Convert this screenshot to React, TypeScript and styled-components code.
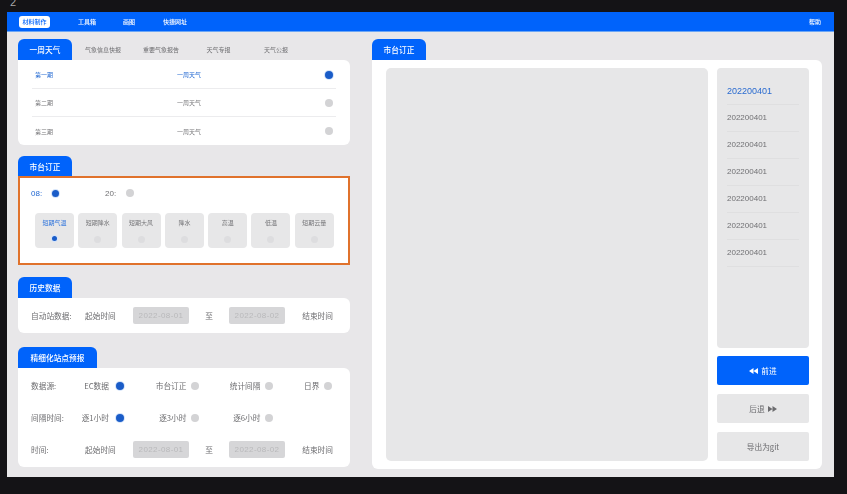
import styled, { createGlobalStyle } from "styled-components";

const Global = createGlobalStyle`
  html, body {
    margin: 0;
    padding: 0;
    background: #141316;
    font-family: "Noto Sans CJK SC", "Liberation Sans", sans-serif;
  }
  * { box-sizing: border-box; }
`;

const Page = styled.div`
  position: relative;
  width: 847px;
  height: 494px;
  padding: 12px 13px 17px 7px;
  background: #141316;
  overflow: hidden;
`;

const Corner = styled.span`
  position: absolute;
  left: 10px;
  top: -5px;
  font: 11px/14px "Liberation Sans", sans-serif;
  color: #a8a8a8;
`;

const Frame = styled.div`
  height: 465px;
  display: flex;
  flex-direction: column;
  background: #e8e7e9;
  filter: blur(0.35px);
`;

const Header = styled.header`
  height: 20px;
  flex: none;
  display: flex;
  align-items: center;
  padding: 0 13px 0 12px;
  background: #0063fb;
  border-bottom: 1px solid #6ba6f5;
  color: #fff;
  font-size: 6px;
  font-weight: 500;
`;

const NavItem = styled.span<{ $active?: boolean; $width: number }>`
  width: ${(p) => p.$width}px;
  height: 12px;
  line-height: 12px;
  text-align: center;
  border-radius: 3px;
  background: ${(p) => (p.$active ? "#fff" : "transparent")};
  color: ${(p) => (p.$active ? "#0063fb" : "#fff")};
`;

const NavGap = styled.span<{ $width: number }>`
  width: ${(p) => p.$width}px;
`;

const Help = styled.span`
  margin-left: auto;
`;

const Body = styled.div`
  flex: 1;
  display: flex;
  gap: 22px;
  padding: 7px 12px 8px 11px;
`;

const Left = styled.div`
  width: 332px;
  display: flex;
  flex-direction: column;
`;

const Right = styled.div`
  width: 450px;
  display: flex;
  flex-direction: column;
`;

const TabRow = styled.div<{ $height?: number }>`
  height: ${(p) => p.$height ?? 21}px;
  flex: none;
  display: flex;
  align-items: stretch;
`;

const Tab = styled.div<{ $width?: number }>`
  width: ${(p) => p.$width ?? 54}px;
  display: flex;
  align-items: center;
  justify-content: center;
  background: #0063fb;
  border-radius: 6px 6px 0 0;
  color: #fff;
  font-size: 7.7px;
  font-weight: 500;
`;

const SoftTab = styled.div<{ $width: number }>`
  width: ${(p) => p.$width}px;
  display: flex;
  align-items: center;
  justify-content: center;
  color: #6f6f72;
  font-size: 6px;
`;

const Card = styled.div<{ $height: number; $mb?: number }>`
  height: ${(p) => p.$height}px;
  margin-bottom: ${(p) => p.$mb ?? 0}px;
  flex: none;
  background: #fff;
  border-radius: 0 6px 6px 6px;
`;

const WeekList = styled(Card)`
  padding: 1px 14px 0;
`;

const WeekRow = styled.div<{ $last?: boolean; $active?: boolean }>`
  height: 28px;
  display: grid;
  grid-template-columns: 142px 1fr 10px;
  align-items: center;
  padding: 0 3px;
  border-bottom: ${(p) => (p.$last ? "none" : "1px solid #ececee")};
  color: ${(p) => (p.$active ? "#1f66d1" : "#77777a")};
  font-size: 6px;

  & > i {
    justify-self: end;
  }
`;

const Dot = styled.i<{ $on?: boolean; $size?: number; $color?: string }>`
  display: block;
  flex: none;
  width: ${(p) => p.$size ?? 7}px;
  height: ${(p) => p.$size ?? 7}px;
  border-radius: 50%;
  background: ${(p) => (p.$on ? "#1a5cc8" : p.$color ?? "#d3d3d5")};
  box-shadow: ${(p) => (p.$on ? "0 0 0 1px #d5e4fa" : "none")};
`;

const OutlinedCard = styled.div`
  height: 89px;
  margin-bottom: 12px;
  flex: none;
  padding: 9px 0 0 11px;
  background: #fff;
  border: 2px solid #e0722c;
`;

const ShiftRow = styled.div`
  display: flex;
  align-items: center;
  height: 12px;
`;

const Shift = styled.div<{ $active?: boolean; $width: number }>`
  width: ${(p) => p.$width}px;
  display: flex;
  align-items: center;
  gap: 10px;
  color: ${(p) => (p.$active ? "#1f66d1" : "#6f6f72")};
  font: 8px "Liberation Sans", sans-serif;
`;

const Chips = styled.div`
  display: flex;
  gap: 4.3px;
  margin: 14px 0 0 4px;
`;

const Chip = styled.div<{ $active?: boolean }>`
  width: 39px;
  height: 35px;
  display: flex;
  flex-direction: column;
  align-items: center;
  gap: 9px;
  padding-top: 5px;
  background: #e7e7e8;
  border-radius: 4px;
  color: ${(p) => (p.$active ? "#2f74dc" : "#77777a")};
  font-size: 6px;
  line-height: 9px;
`;

const FormCard = styled(Card)`
  padding: 0 17px 0 13px;
  display: flex;
  flex-direction: column;
  justify-content: center;
  gap: 18px;
`;

const FormRow = styled.div`
  display: grid;
  grid-template-columns: 54px 48px 56px 40px 56px 1fr;
  align-items: center;
  height: 14px;
  color: #6c6c6f;
  font-size: 7.7px;
`;

const Label = styled.span`
  white-space: nowrap;
`;

const DateBox = styled.div`
  width: 56px;
  height: 17px;
  margin: -1.5px 0;
  text-align: center;
  background: #d6d6d8;
  border-radius: 2px;
  color: #b9b9bb;
  font: 8px/17px "Liberation Sans", sans-serif;
  letter-spacing: 0.4px;
`;

const To = styled.span`
  justify-self: center;
`;

const End = styled.span`
  justify-self: end;
`;

const OptionRow = styled.div`
  display: grid;
  grid-template-columns: 54px 39px 75px 74px 59px;
  align-items: center;
  height: 14px;
  color: #6c6c6f;
  font-size: 7.7px;
`;

const Option = styled.div`
  display: flex;
  align-items: center;
  justify-content: flex-end;
  gap: 4.5px;
  white-space: nowrap;

  &:nth-child(2) {
    gap: 7px;
  }
`;

const Main = styled.div`
  flex: 1;
  display: flex;
  gap: 9px;
  padding: 8px 13px 8px 14px;
  background: #fff;
  border-radius: 0 6px 6px 6px;
`;

const Viewer = styled.div`
  width: 322px;
  background: #e7e7e8;
  border-radius: 5px;
`;

const Side = styled.div`
  flex: 1;
  display: flex;
  flex-direction: column;
  gap: 9px;
`;

const FileList = styled.div`
  height: 280px;
  margin-bottom: -1px;
  padding: 10px 10px 0;
  background: #e7e7e8;
  border-radius: 4px;
`;

const FileItem = styled.div<{ $active?: boolean }>`
  height: 27px;
  border-bottom: 1px solid #dfdfe0;
  color: ${(p) => (p.$active ? "#2a6bd0" : "#707073")};
  font: ${(p) => (p.$active ? 9 : 8)}px/26px "Liberation Sans", sans-serif;
`;

const Action = styled.div<{ $primary?: boolean }>`
  height: 29px;
  display: flex;
  align-items: center;
  justify-content: center;
  gap: 3px;
  background: ${(p) => (p.$primary ? "#0063fb" : "#e7e7e8")};
  border-radius: 2px;
  color: ${(p) => (p.$primary ? "#fff" : "#6c6c6f")};
  font-size: 7.7px;
`;

const Arrows = ({ back }: { back?: boolean }) => (
  <svg width="9" height="6" viewBox="0 0 9 6" style={back ? { transform: "scaleX(-1)" } : undefined}>
    <path d="M0 0 L4.5 3 L0 6 Z M4.5 0 L9 3 L4.5 6 Z" fill="currentColor" />
  </svg>
);

const weeks = ["第一期", "第二期", "第三期"];
const tabs: [string, number][] = [
  ["气象信息快报", 62],
  ["重要气象报告", 54],
  ["天气专报", 61],
  ["天气公报", 54],
];
const chips = ["短期气温", "短期降水", "短期大风", "降水", "高温", "低温", "短期云量"];
const sources = ["EC数据", "市台订正", "统计间隔", "日界"];
const spans = ["逐1小时", "逐3小时", "逐6小时"];

export default function App() {
  return (
    <Page>
      <Global />
      <Corner>2</Corner>
      <Frame>
        <Header>
          <NavItem $active $width={31}>材料制作</NavItem>
          <NavGap $width={19} />
          <NavItem $width={36}>工具箱</NavItem>
          <NavGap $width={9} />
          <NavItem $width={30}>画图</NavItem>
          <NavGap $width={14} />
          <NavItem $width={34}>快捷网址</NavItem>
          <Help>帮助</Help>
        </Header>
        <Body>
          <Left>
            <TabRow>
              <Tab>一周天气</Tab>
              {tabs.map(([t, w]) => (
                <SoftTab key={t} $width={w}>{t}</SoftTab>
              ))}
            </TabRow>
            <WeekList $height={85} $mb={11}>
              {weeks.map((w, i) => (
                <WeekRow key={w} $active={i === 0} $last={i === 2}>
                  <span>{w}</span>
                  <span>一周天气</span>
                  <Dot $on={i === 0} $size={8} />
                </WeekRow>
              ))}
            </WeekList>

            <TabRow $height={20}>
              <Tab>市台订正</Tab>
            </TabRow>
            <OutlinedCard>
              <ShiftRow>
                <Shift $active $width={74}>08: <Dot $on /></Shift>
                <Shift $width={60}>20: <Dot $size={8} /></Shift>
              </ShiftRow>
              <Chips>
                {chips.map((c, i) => (
                  <Chip key={c} $active={i === 0}>
                    {c}
                    <Dot $on={i === 0} $size={i === 0 ? 5 : 7} $color="#dddddf" />
                  </Chip>
                ))}
              </Chips>
            </OutlinedCard>

            <TabRow>
              <Tab>历史数据</Tab>
            </TabRow>
            <FormCard $height={35} $mb={14}>
              <FormRow>
                <Label>自动站数据:</Label>
                <Label>起始时间</Label>
                <DateBox>2022-08-01</DateBox>
                <To>至</To>
                <DateBox>2022-08-02</DateBox>
                <End>结束时间</End>
              </FormRow>
            </FormCard>

            <TabRow>
              <Tab $width={79}>精细化站点预报</Tab>
            </TabRow>
            <FormCard $height={99}>
              <OptionRow>
                <Label>数据源:</Label>
                {sources.map((s, i) => (
                  <Option key={s}>
                    {s}
                    <Dot $on={i === 0} $size={8} />
                  </Option>
                ))}
              </OptionRow>
              <OptionRow>
                <Label>间隔时间:</Label>
                {spans.map((s, i) => (
                  <Option key={s}>
                    {s}
                    <Dot $on={i === 0} $size={8} />
                  </Option>
                ))}
              </OptionRow>
              <FormRow>
                <Label>时间:</Label>
                <Label>起始时间</Label>
                <DateBox>2022-08-01</DateBox>
                <To>至</To>
                <DateBox>2022-08-02</DateBox>
                <End>结束时间</End>
              </FormRow>
            </FormCard>
          </Left>

          <Right>
            <TabRow>
              <Tab>市台订正</Tab>
            </TabRow>
            <Main>
              <Viewer />
              <Side>
                <FileList>
                  {Array.from({ length: 7 }, (_, i) => (
                    <FileItem key={i} $active={i === 0}>202200401</FileItem>
                  ))}
                </FileList>
                <Action $primary><Arrows back /> 前进</Action>
                <Action>后退 <Arrows /></Action>
                <Action>导出为git</Action>
              </Side>
            </Main>
          </Right>
        </Body>
      </Frame>
    </Page>
  );
}
